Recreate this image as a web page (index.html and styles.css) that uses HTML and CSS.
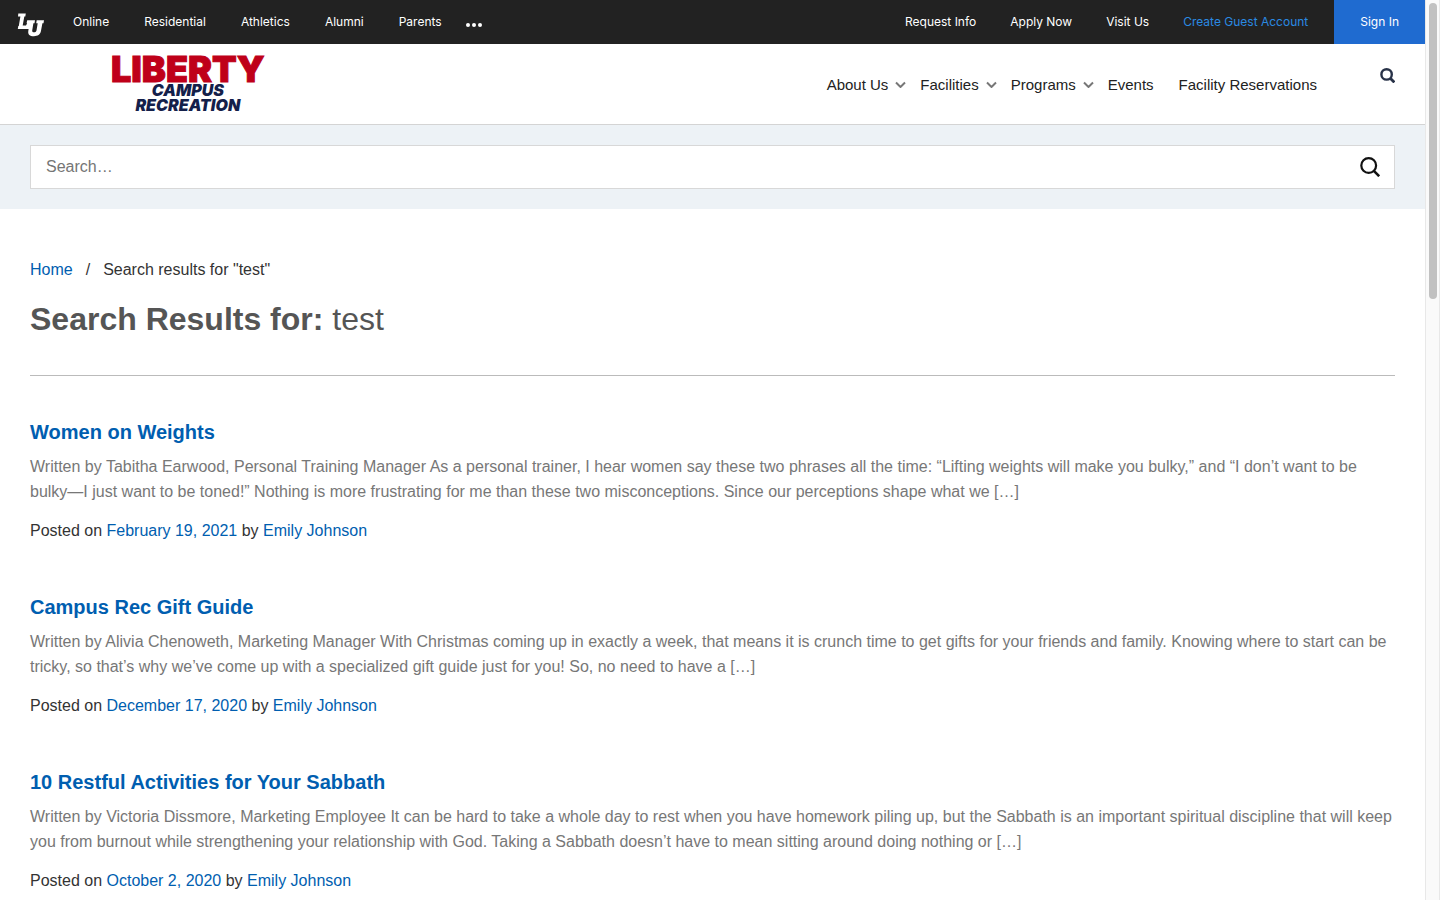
FILE: index.html
```html
<!DOCTYPE html>
<html lang="en">
<head>
<meta charset="utf-8">
<meta name="viewport" content="width=device-width, initial-scale=1">
<title>Search Results for: test</title>
<link rel="stylesheet" href="styles.css">
</head>
<body>
<div class="page">
  <div class="topbar">
    <a class="mark" href="#" aria-label="Liberty University">
      <svg viewBox="0 0 28 24" width="28" height="24" aria-hidden="true"><path fill="#fff" d="M1.3 .6H8.8L8.3 3.6H7.3L5.7 12.6H9L10.2 10.2H9.6L10.2 7.2H18L17.5 10.2H16.4L15.2 17.4C14.8 20 19 20 19.5 17.4L20.7 10.2H19.2L19.7 7.2H27L26.5 10.2H25.4L24 17.8C23.3 21.8 20.6 23.2 17 23.2C12.6 23.2 10.8 21.4 11.3 17.9L11.6 16H.8L1.3 13H1.8L3.4 3.6H1Z"/></svg>
    </a>
    <nav class="toplinks" aria-label="University">
      <a href="#">Online</a><a href="#">Residential</a><a href="#">Athletics</a><a href="#">Alumni</a><a href="#">Parents</a>
      <button class="more" type="button" aria-label="More"><svg viewBox="0 0 16 4" width="16" height="4" aria-hidden="true"><g fill="#fff"><circle cx="2" cy="2" r="2"/><circle cx="8" cy="2" r="2"/><circle cx="14" cy="2" r="2"/></g></svg></button>
    </nav>
    <nav class="toplinks account" aria-label="Account">
      <a href="#">Request Info</a><a href="#">Apply Now</a><a href="#">Visit Us</a><a class="guest" href="#">Create Guest Account</a><a class="signin" href="#">Sign In</a>
    </nav>
  </div>

  <header class="header">
    <a class="logo" href="#"><span class="logo-name">LIBERTY</span><span class="logo-sub">CAMPUS</span><span class="logo-sub">RECREATION</span></a>
    <nav class="menu" aria-label="Main">
      <a href="#">About Us <svg class="chev" viewBox="0 0 11 8" aria-hidden="true"><path d="M1 2.5L5.5 7L10 2.5"/></svg></a>
      <a href="#">Facilities <svg class="chev" viewBox="0 0 11 8" aria-hidden="true"><path d="M1 2.5L5.5 7L10 2.5"/></svg></a>
      <a href="#">Programs <svg class="chev" viewBox="0 0 11 8" aria-hidden="true"><path d="M1 2.5L5.5 7L10 2.5"/></svg></a>
      <a class="plain" href="#">Events</a>
      <a href="#">Facility Reservations</a>
    </nav>
    <button class="find" type="button" aria-label="Open search"><svg viewBox="0 0 15 15" width="15" height="15" aria-hidden="true"><g fill="none" stroke="#283248" stroke-width="2.4"><circle cx="6.6" cy="6.4" r="5.2"/><path d="M10 10L14.4 14.4" stroke-width="2.8"/></g></svg></button>
  </header>

  <div class="band">
    <form class="search" role="search">
      <input type="search" aria-label="Search" placeholder="Search…">
      <button type="button" aria-label="Search"><svg viewBox="0 0 20 20" width="20" height="20" aria-hidden="true"><g fill="none" stroke="#111" stroke-width="2.2"><circle cx="8.7" cy="8.5" r="7.4"/><path d="M13.6 13.6L19.2 19.2" stroke-width="2.6"/></g></svg></button>
    </form>
  </div>

  <main class="main">
    <nav class="crumbs" aria-label="Breadcrumb"><a href="#">Home</a><span>/</span><span>Search results for "test"</span></nav>
    <h1>Search Results for: <span>test</span></h1>
    <article class="post">
      <h2><a href="#">Women on Weights</a></h2>
      <p>Written by Tabitha Earwood, Personal Training Manager As a personal trainer, I hear women say these two phrases all the time: “Lifting weights will make you bulky,” and “I don’t want to be bulky—I just want to be toned!” Nothing is more frustrating for me than these two misconceptions. Since our perceptions shape what we […]</p>
      <div class="meta">Posted on <a href="#">February 19, 2021</a> by <a href="#">Emily Johnson</a></div>
    </article>
    <article class="post">
      <h2><a href="#">Campus Rec Gift Guide</a></h2>
      <p>Written by Alivia Chenoweth, Marketing Manager With Christmas coming up in exactly a week, that means it is crunch time to get gifts for your friends and family. Knowing where to start can be tricky, so that’s why we’ve come up with a specialized gift guide just for you! So, no need to have a […]</p>
      <div class="meta">Posted on <a href="#">December 17, 2020</a> by <a href="#">Emily Johnson</a></div>
    </article>
    <article class="post">
      <h2><a href="#">10 Restful Activities for Your Sabbath</a></h2>
      <p>Written by Victoria Dissmore, Marketing Employee It can be hard to take a whole day to rest when you have homework piling up, but the Sabbath is an important spiritual discipline that will keep you from burnout while strengthening your relationship with God. Taking a Sabbath doesn’t have to mean sitting around doing nothing or […]</p>
      <div class="meta">Posted on <a href="#">October 2, 2020</a> by <a href="#">Emily Johnson</a></div>
    </article>
  </main>
</div>
<div class="scroll" aria-hidden="true"><div class="thumb"></div></div>
</body>
</html>
```
FILE: styles.css
```css
* { box-sizing: border-box; }
body {
  margin: 0;
  min-height: 100vh;
  display: grid;
  grid-template-columns: minmax(0, 1fr) 15px;
  background: #fff;
  color: #333;
  font: 16px/25px "Liberation Sans", Arial, sans-serif;
}
a { color: #005eb0; text-decoration: none; }
button { border: 0; padding: 0; background: none; cursor: pointer; }
svg { display: block; flex: none; }

.topbar {
  display: flex;
  height: 44px;
  background: #222;
  font: 12px/44px Inter, sans-serif;
}
.mark { padding: 13px 11px 0 17px; }
.toplinks { display: flex; gap: 1px; }
.toplinks a { padding: 0 17px; color: #fff; white-space: nowrap; }
.more { padding: 6px 6px 0; }
.account { gap: 0; margin-left: auto; }
.toplinks .guest { padding-right: 26px; color: #2a8ae2; }
.toplinks .signin { padding: 0 26px; background: #1f6bd0; }

.header {
  display: flex;
  align-items: center;
  min-height: 81px;
  padding: 0 30px 0 111px;
  border-bottom: 1px solid #d4d4d4;
}
.logo {
  display: flex;
  flex-direction: column;
  align-items: center;
  font-family: Inter, sans-serif;
  font-weight: 900;
}
.logo-name {
  color: #bf0019;
  font-size: 36px;
  line-height: 27px;
  -webkit-text-stroke: 1px #bf0019;
}
.logo-sub { color: #14204a; font-size: 16px; line-height: 15px; font-style: italic; }
.menu { display: flex; gap: 14px; margin-left: auto; }
.menu a {
  display: flex;
  align-items: center;
  gap: 7px;
  color: #222;
  font-size: 15px;
  white-space: nowrap;
}
.menu .plain { padding-right: 11px; }
.chev { width: 11px; height: 8px; fill: none; stroke: #777; stroke-width: 2; }
.find { align-self: flex-start; margin: 24px 0 0 63px; }

.band { padding: 20px 30px; background: #edf2f6; }
.search {
  display: flex;
  align-items: center;
  height: 44px;
  border: 1px solid #d8d8d8;
  background: #fff;
}
.search input {
  flex: 1;
  min-width: 0;
  height: 42px;
  padding: 0 15px;
  border: 0;
  background: none;
  font: inherit;
  appearance: none;
}
.search input::placeholder { color: #757575; }
.search button { padding: 0 14px; }

.main { padding: 48px 30px 0; }
.crumbs { display: flex; gap: 13px; }
h1 {
  margin: 17px 0 42px;
  padding-bottom: 36px;
  border-bottom: 1px solid #bbb;
  color: #555;
  font-size: 32px;
  line-height: 40px;
}
h1 span { font-weight: 400; }
.post + .post { margin-top: 50px; }
h2 { margin: 0 0 8px; font-size: 20px; line-height: 28px; }
.post p { margin: 0 0 14px; color: #777; }

.scroll {
  padding: 3px;
  background: #fafafa;
  border: solid #e8e8e8;
  border-width: 0 1px;
}
.thumb { width: 8px; height: 296px; border-radius: 4px; background: #c1c1c1; }
```
